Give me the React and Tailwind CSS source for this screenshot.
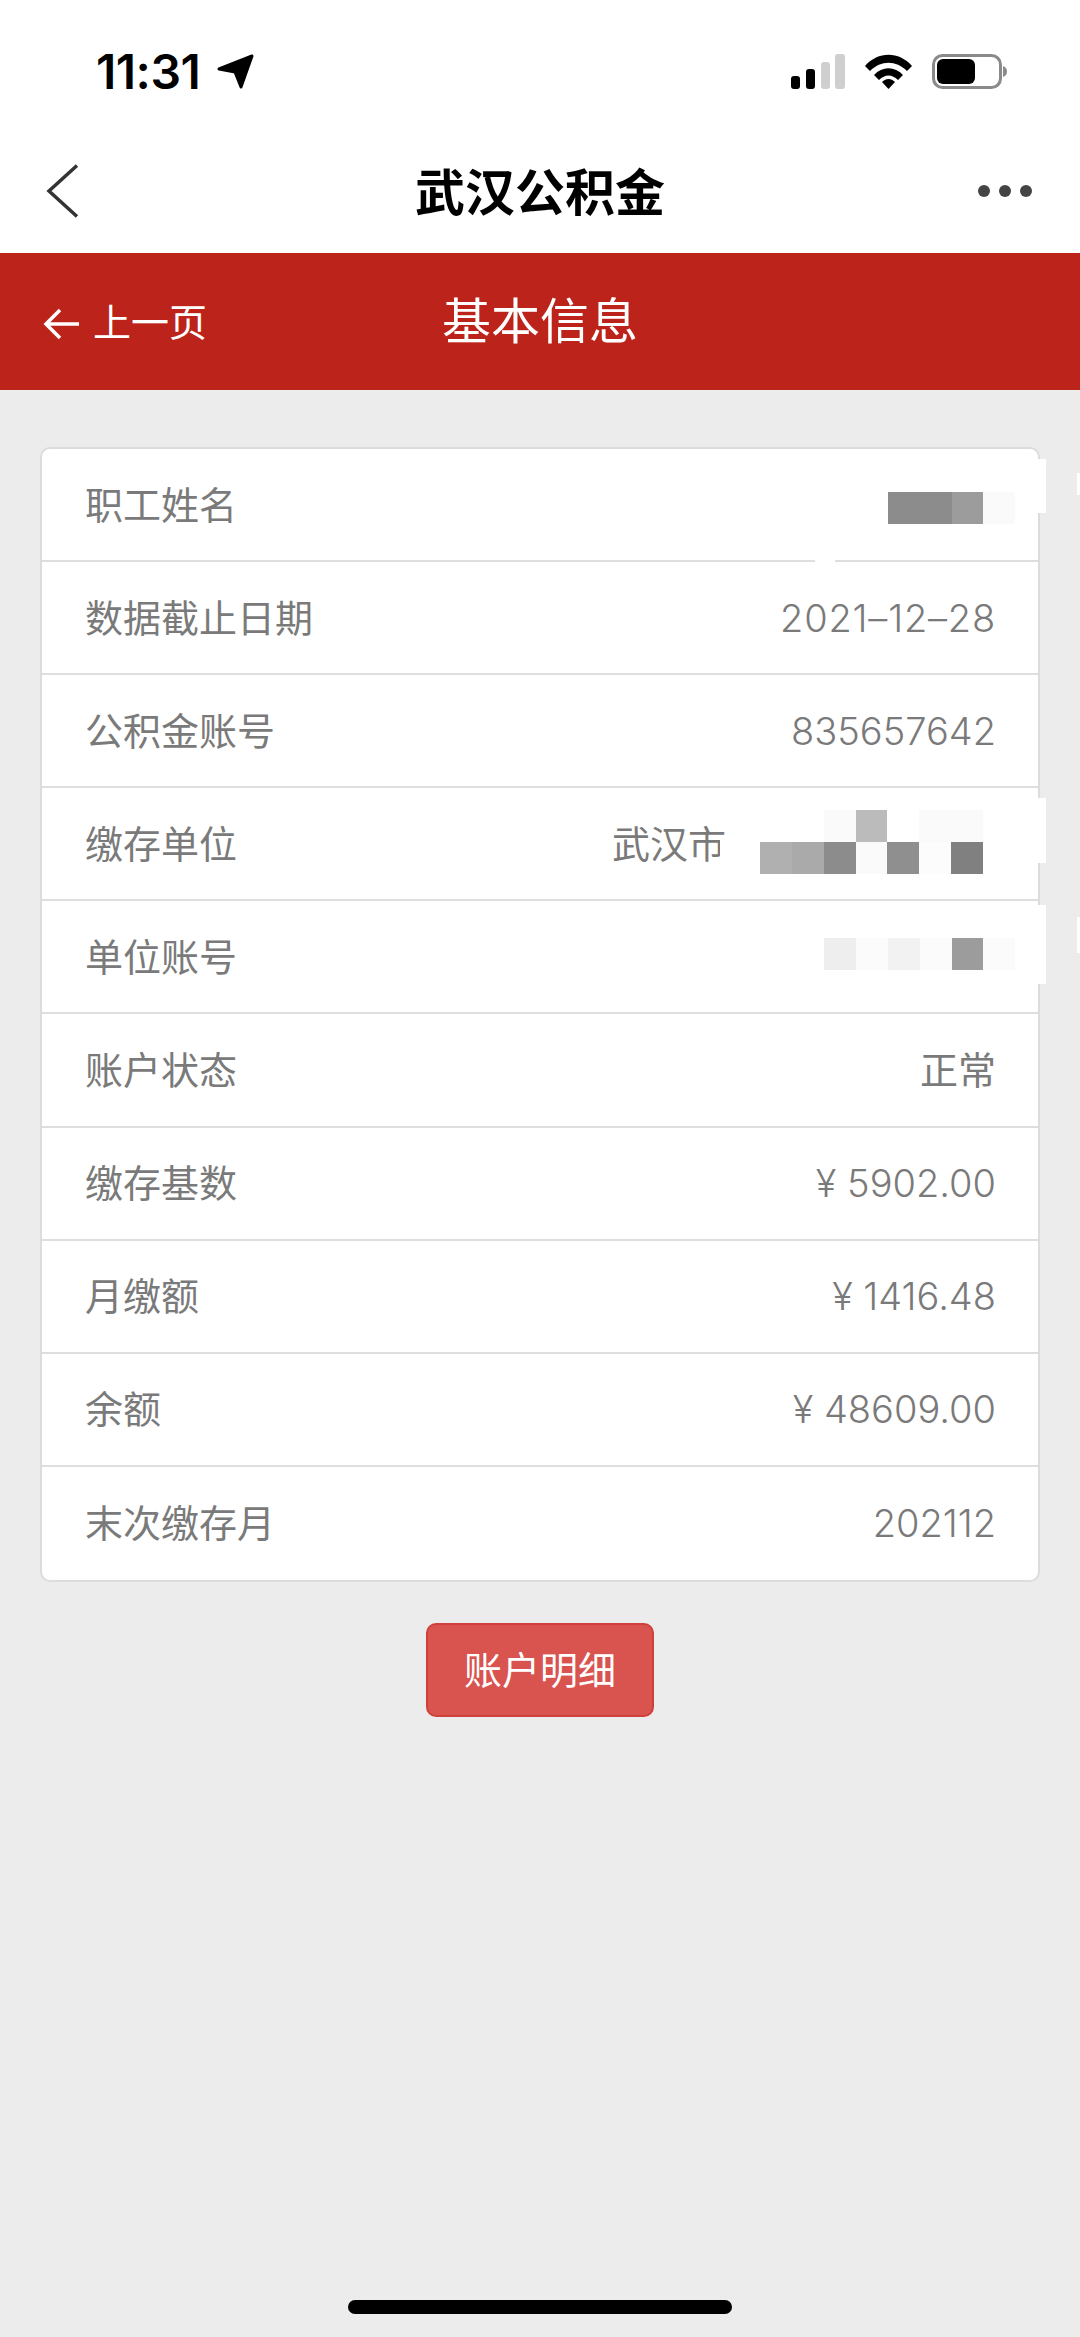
const rows = [
  { label: "职工姓名", value: "" },
  { label: "数据截止日期", value: "2021–12–28", spaced: true },
  { label: "公积金账号", value: "835657642" },
  { label: "缴存单位", value: "武汉市" },
  { label: "单位账号", value: "" },
  { label: "账户状态", value: "正常", cjk: true },
  { label: "缴存基数", value: "¥ 5902.00" },
  { label: "月缴额", value: "¥ 1416.48" },
  { label: "余额", value: "¥ 48609.00" },
  { label: "末次缴存月", value: "202112" },
];

const StatusIcons = () => (
  <div className="flex items-center">
    <svg width="54" height="35" viewBox="0 0 54 35">
      <rect x="0" y="22" width="9" height="13" rx="3" fill="#000" />
      <rect x="15" y="15" width="9" height="20" rx="3" fill="#000" />
      <rect x="30" y="8" width="9" height="27" rx="3" fill="#cfcfcf" />
      <rect x="44" y="0" width="10" height="35" rx="3" fill="#cfcfcf" />
    </svg>
    <svg className="ml-5" width="47" height="35" viewBox="0 0 47 35">
      <path d="M0 12 C13 -3 34 -3 47 12 L42 17 C31 6 16 6 5 17 Z" fill="#000" />
      <path d="M9 21 C17 12 30 12 38 21 L33 26 C27 20 20 20 14 26 Z" fill="#000" />
      <path d="M17 28 C21 24 26 24 30 28 L23.5 35 Z" fill="#000" />
    </svg>
    <svg className="ml-5" width="75" height="35" viewBox="0 0 75 35">
      <rect x="1.5" y="1.5" width="67" height="32" rx="9" fill="none" stroke="#8a8a8a" strokeWidth="3" />
      <rect x="5" y="5" width="38" height="25" rx="6" fill="#000" />
      <path d="M71 12 C74 13 75 15 75 17.5 C75 20 74 22 71 23 Z" fill="#8a8a8a" />
    </svg>
  </div>
);

export default function App() {
  return (
    <div className="min-h-[2337px] bg-[#ececec] font-['Inter','Noto_Sans_CJK_SC',sans-serif] flex flex-col">
      {/* status bar */}
      <div className="h-[143px] bg-white flex items-start justify-between pl-[96px] pr-[73px] pt-[54px]">
        <div className="flex items-center h-[35px]">
          <span className="text-[48px] font-semibold leading-none text-black tracking-[-0.5px]">11:31</span>
          <svg className="ml-[17px]" width="37" height="36" viewBox="0 0 37 36">
            <path d="M35 2 L24 33 L18 18 L2 15 Z" fill="#000" stroke="#000" strokeWidth="3" strokeLinejoin="round" />
          </svg>
        </div>
        <StatusIcons />
      </div>

      {/* wechat nav */}
      <div className="h-[110px] bg-white flex items-center justify-between pl-[46px] pr-[48px] relative">
        <svg width="34" height="54" viewBox="0 0 34 54" className="-mt-[14px]">
          <path d="M31 1.5 L3 27 L31 52.5" fill="none" stroke="#333" strokeWidth="3.5" />
        </svg>
        <span className="absolute left-0 right-0 text-center text-[50px] font-bold text-black leading-none -mt-[11px]">武汉公积金</span>
        <div className="flex gap-[9px] -mt-[14px]">
          <span className="w-[12px] h-[12px] rounded-full bg-[#444]" />
          <span className="w-[12px] h-[12px] rounded-full bg-[#444]" />
          <span className="w-[12px] h-[12px] rounded-full bg-[#444]" />
        </div>
      </div>

      {/* red header */}
      <div className="h-[137px] bg-[#bc241b] flex items-center pl-[43px] relative">
        <svg width="36" height="32" viewBox="0 0 36 32" className="mt-[5px]">
          <path d="M36 16 H3 M17 2 L3 16 L17 30" fill="none" stroke="#fff" strokeWidth="3.5" />
        </svg>
        <span className="ml-[14px] text-[38px] font-normal text-white leading-none mt-[1px]">上一页</span>
        <span className="absolute left-0 right-0 text-center text-[49px] font-normal text-white leading-none -mt-[1px]">基本信息</span>
      </div>

      {/* info list */}
      <div className="relative mt-[57px] mx-[40px] bg-white border-2 border-[#dcdcdc] rounded-[10px] flex flex-col">
        {rows.map((row, i) => (
          <div key={row.label} className={`h-[113.1px] flex items-center justify-between pl-[43px] pr-[42px] ${i < rows.length - 1 ? "border-b-2 border-[#dedede]" : ""}`}>
            <span className="text-[38px] font-normal text-[#7a7a7a] leading-none">{row.label}</span>
            {i === 0 && (
              <div className="flex mr-[-19px] mt-[6px]">
                <span className="w-[32px] h-[32px] bg-[#8c8c8c]" />
                <span className="w-[32px] h-[32px] bg-[#8c8c8c]" />
                <span className="w-[31px] h-[32px] bg-[#9c9c9c]" />
                <span className="w-[32px] h-[32px] bg-[#fafafa]" />
              </div>
            )}
            {i === 3 && (
              <div className="flex items-center mr-[13px]">
                <span className="relative text-[38px] font-normal text-[#7a7a7a] leading-none">
                  武汉市
                  {/* retouch over the last glyph */}
                  <span className="absolute right-[-6px] top-[14px] w-[12px] h-[24px] bg-white" />
                </span>
                <div className="ml-[34px] -mt-[4px] grid grid-cols-7 grid-rows-2 w-[223px] h-[64px]">
                  <span className="bg-white" /><span className="bg-white" /><span className="bg-[#fafafa]" /><span className="bg-[#bbbbbb]" /><span className="bg-white" /><span className="bg-[#fafafa]" /><span className="bg-[#fafafa]" />
                  <span className="bg-[#b0b0b0]" /><span className="bg-[#aaaaaa]" /><span className="bg-[#8c8c8c]" /><span className="bg-[#fafafa]" /><span className="bg-[#8f8f8f]" /><span className="bg-[#fcfcfc]" /><span className="bg-[#808080]" />
                </div>
              </div>
            )}
            {i === 4 && (
              <div className="flex mr-[-19px] -mt-[6px]">
                <span className="w-[32px] h-[32px] bg-[#eeeeee]" />
                <span className="w-[32px] h-[32px] bg-[#fbfbfb]" />
                <span className="w-[32px] h-[32px] bg-[#f2f2f2]" />
                <span className="w-[32px] h-[32px] bg-[#fbfbfb]" />
                <span className="w-[31px] h-[32px] bg-[#9c9c9c]" />
                <span className="w-[32px] h-[32px] bg-[#fbfbfb]" />
              </div>
            )}
            {i !== 0 && i !== 3 && i !== 4 && (
              <span className={`text-[38px] text-[#7a7a7a] leading-none ${row.cjk ? "font-normal" : "font-light"} ${row.spaced ? "tracking-[0.8px]" : ""}`}>{row.value}</span>
            )}
          </div>
        ))}

        {/* white retouch marks over the card edge */}
        <span className="absolute right-[-8px] top-[10px] w-[8px] h-[54px] bg-white" />
        <span className="absolute right-[-8px] top-[349px] w-[8px] h-[65px] bg-white" />
        <span className="absolute right-[-8px] top-[456px] w-[8px] h-[79px] bg-white" />
        <span className="absolute right-[-42px] top-[24px] w-[3px] h-[22px] bg-white" />
        <span className="absolute right-[-42px] top-[468px] w-[3px] h-[36px] bg-white" />
        <span className="absolute left-[773px] top-[110px] w-[20px] h-[3px] bg-white" />
      </div>

      {/* detail button */}
      <div className="flex justify-center mt-[41px]">
        <button className="w-[228px] h-[94px] rounded-[10px] bg-[#d9534f] border-2 border-[#d0403b] text-white text-[38px] font-normal leading-none">账户明细</button>
      </div>

      {/* home indicator */}
      <div className="mt-auto mb-[23px] mx-auto w-[384px] h-[14px] rounded-full bg-black" />
    </div>
  );
}
